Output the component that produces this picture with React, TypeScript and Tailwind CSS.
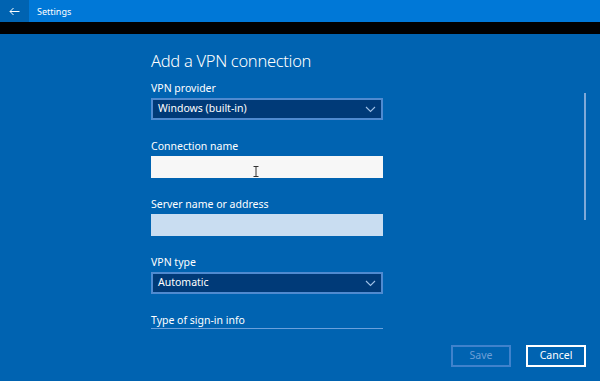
import React from "react";

const Chevron = () => (
  <svg width="11" height="7" viewBox="0 0 11 7" className="shrink-0">
    <path d="M1 1 L5.5 5.5 L10 1" fill="none" stroke="#9fc0e6" strokeWidth="1.1" />
  </svg>
);

const Select = ({ value }: { value: string }) => (
  <div className="flex h-[22px] w-[232px] items-center justify-between border-2 border-[#4f8ad0] bg-[#003a78] pl-[5px] pr-[5px] text-[10.5px] text-white">
    <span>{value}</span>
    <Chevron />
  </div>
);

export default function App() {
  return (
    <div
      className="flex h-[381px] w-[600px] flex-col overflow-hidden bg-[#0063b1] text-white"
      style={{ fontFamily: '"Noto Sans", "Open Sans", sans-serif' }}
    >
      <div className="flex h-[22px] shrink-0 items-center bg-[#0078d7]">
        <div className="flex h-full w-[29px] items-center justify-center bg-[#0063b1]">
          <svg width="11" height="9" viewBox="0 0 11 9">
            <path d="M10.5 4.5 H1 M4.5 1 L1 4.5 L4.5 8" fill="none" stroke="white" strokeWidth="1" />
          </svg>
        </div>
        <span className="pl-[8px] text-[9px] leading-none">Settings</span>
      </div>
      <div className="h-[12px] shrink-0 bg-black" />
      <div className="relative flex flex-1">
        <div className="flex flex-col pl-[151px] pt-[16px]">
          <div className="text-[16.5px] font-light leading-[22px] tracking-[-0.3px]">Add a VPN connection</div>
          <div className="mt-[9px] text-[10.5px] leading-[14px]">VPN provider</div>
          <div className="mt-[3px]">
            <Select value="Windows (built-in)" />
          </div>
          <div className="mt-[19px] text-[10.5px] leading-[14px]">Connection name</div>
          <div className="relative mt-[3px] h-[22px] w-[232px] bg-[#f7f7f7]">
            <svg width="6" height="11" viewBox="0 0 6 11" className="absolute left-[102px] top-[10px]">
              <path d="M0.5 0.5 H5.5 M0.5 10.5 H5.5 M3 0.5 V10.5" fill="none" stroke="#333" strokeWidth="1" />
            </svg>
          </div>
          <div className="mt-[19px] text-[10.5px] leading-[14px]">Server name or address</div>
          <div className="mt-[3px] h-[22px] w-[232px] bg-[#c9ddf1]" />
          <div className="mt-[19px] text-[10.5px] leading-[14px]">VPN type</div>
          <div className="mt-[3px]">
            <Select value="Automatic" />
          </div>
          <div className="mt-[19px] w-[232px] border-b border-[#6aa0dc] pb-[1px] text-[10.5px] leading-[14px]">
            Type of sign-in info
          </div>
        </div>
        <div className="absolute left-[584px] top-[59px] h-[127px] w-[2px] bg-[#7fa9d8]" />
        <div className="absolute bottom-[14px] right-[14px] flex gap-[15px]">
          <div className="flex h-[22px] w-[60px] items-center justify-center border-2 border-[#3f82cc] text-[10.5px] text-[#6c9fd6]">
            Save
          </div>
          <div className="flex h-[22px] w-[60px] items-center justify-center border-2 border-white text-[10.5px] text-white">
            Cancel
          </div>
        </div>
      </div>
    </div>
  );
}
